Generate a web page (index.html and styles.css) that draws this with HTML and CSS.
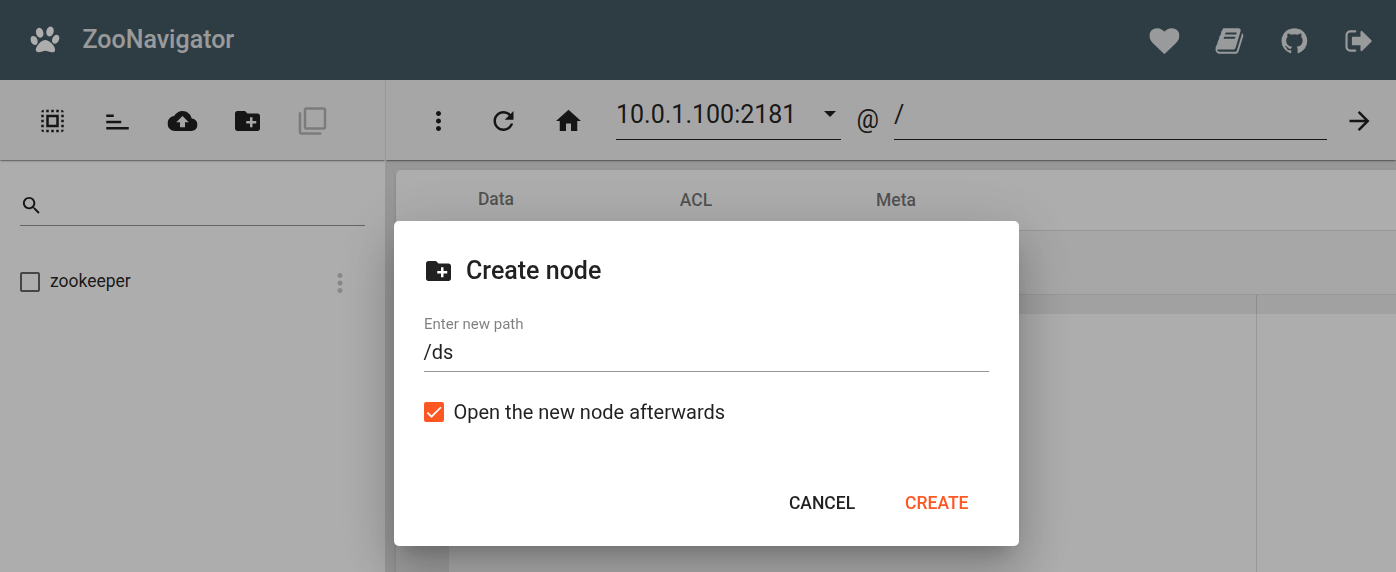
FILE: index.html
```
<!DOCTYPE html>
<html lang="en">
<head>
<meta charset="utf-8">
<title>ZooNavigator</title>
<link rel="stylesheet" href="styles.css">
</head>
<body>
<div class="app">
  <header class="header">
    <svg class="icon logo" viewBox="0 0 1792 1792"><path d="M780 510q0 60-19 113.500t-63 92.500-105 39q-76 0-138-57.500t-92-135.500-30-151q0-60 19-113.500t63-92.500 105-39q77 0 138.500 57.500t91.500 135 30 151.500zm-342 483q0 80-42 139t-119 59q-76 0-141.500-55.500t-100.500-133.500-35-152q0-80 42-139.500t119-59.500q76 0 141.500 55.500t100.500 134 35 152.500zm458-97q118 0 255 97.500t229 237 92 254.500q0 46-17 76.500t-48.500 45-64.500 20-76 5.500q-68 0-187.500-45t-182.500-45q-66 0-192.500 44.500t-200.500 44.500q-183 0-183-146 0-86 56-191.500t139.500-192.500 187.500-146 193-59zm239-211q-61 0-105-39t-63-92.500-19-113.500q0-74 30-151.500t91.500-135 138.500-57.500q61 0 105 39t63 92.500 19 113.500q0 73-30 151t-92 135.500-138 57.500zm432-104q77 0 119 59.500t42 139.500q0 74-35 152t-100.500 133.500-141.500 55.500q-77 0-119-59t-42-139q0-74 35-152.500t100.500-134 141.500-55.500z"/></svg>
    <h1 class="brand">ZooNavigator</h1>
    <nav class="links">
      <svg class="icon" viewBox="0 0 1792 1792"><path d="M896 1664q-26 0-44-18l-624-602q-10-8-27.500-26T145 952.500 77 855 23.500 734 0 596q0-220 127-344t351-124q62 0 126.500 21.500t120 58T820 276t76 68q36-36 76-68t95.500-68.500 120-58T1314 128q224 0 351 124t127 344q0 221-229 450l-623 600q-18 18-44 18z"/></svg>
      <svg class="icon" viewBox="0 0 1792 1792"><path d="M1703 478q40 57 18 129l-275 906q-19 64-76.500 107.500t-122.500 43.500h-923q-77 0-148.500-53.500t-99.500-131.500q-24-67-2-127 0-4 3-27t4-37q1-8-3-21.500t-3-19.500q2-11 8-21t16.500-23.500 16.500-23.500q23-38 45-91.500t30-91.500q3-10 .5-30t-.5-28q3-11 17-28t17-23q21-36 42-92t25-90q1-9-2.500-32t.5-28q4-13 22-30.500t22-22.500q19-26 42.500-84.500t27.500-96.500q1-8-3-25.500t-2-26.500q2-8 9-18t18-23 17-21q8-12 16.500-30.500t15-35 16-36 19.500-32 26.500-23.500 36-11.500 47.500 5.500l-1 3q38-9 51-9h761q74 0 114 56t18 130l-274 906q-36 119-71.500 153.500t-128.500 34.500h-869q-27 0-38 15-11 16-1 43 24 70 144 70h923q29 0 56-15.500t35-41.500l300-987q7-22 5-57 38 15 59 43zm-1064 2q-4 13 2 22.500t20 9.500h608q13 0 25.500-9.500t16.500-22.500l21-64q4-13-2-22.500t-20-9.500h-608q-13 0-25.500 9.500t-16.500 22.500zm-83 256q-4 13 2 22.500t20 9.500h608q13 0 25.500-9.500t16.500-22.500l21-64q4-13-2-22.500t-20-9.500h-608q-13 0-25.500 9.500t-16.500 22.500z"/></svg>
      <svg class="icon" viewBox="0 0 1792 1792"><path d="M896 128q209 0 385.500 103t279.500 279.500 103 385.500q0 251-146.500 451.500t-378.500 277.500q-27 5-40-7t-13-30q0-3 .5-76.500t.5-134.500q0-97-52-142 57-6 102.500-18t94-39 81-66.500 53-105 20.500-150.500q0-119-79-206 37-91-8-204-28-9-81 11t-92 44l-38 24q-93-26-192-26t-192 26q-16-11-42.500-27t-83.500-38.500-85-13.500q-45 113-8 204-79 87-79 206 0 85 20.500 150t52.500 105 80.500 67 94 39 102.500 18q-39 36-49 103-21 10-45 15t-57 5-65.500-21.500-55.500-62.500q-19-32-48.500-52t-49.500-24l-20-3q-21 0-29 4.500t-5 11.500 9 14 13 12l7 5q22 10 43.500 38t31.500 51l10 23q13 38 44 61.500t67 30 69.500 7 55.500-3.500l23-4q0 38 .5 88.500t.5 54.500q0 18-13 30t-40 7q-232-77-378.500-277.500t-146.500-451.500q0-209 103-385.500t279.500-279.500 385.500-103z"/></svg>
      <svg class="icon" viewBox="0 0 1792 1792"><path d="M704 1440q0 4 1 20t.5 26.500-3 23.500-10 19.500-20.500 6.500h-320q-119 0-203.500-84.500t-84.500-203.500v-704q0-119 84.500-203.500t203.500-84.500h320q13 0 22.500 9.500t9.500 22.500q0 4 1 20t.5 26.500-3 23.500-10 19.500-20.500 6.500h-320q-66 0-113 47t-47 113v704q0 66 47 113t113 47h312l11.500 1 11.500 3 8 5.500 7 9 2 13.500zm928-544q0 26-19 45l-544 544q-19 19-45 19t-45-19-19-45v-288h-448q-26 0-45-19t-19-45v-384q0-26 19-45t45-19h448v-288q0-26 19-45t45-19 45 19l544 544q19 19 19 45z"/></svg>
    </nav>
  </header>

  <div class="workspace">
    <aside class="sidebar">
      <div class="toolbar side-tools">
        <svg class="icon" viewBox="0 0 24 24"><path d="M3 5h2V3c-1.100 0-2 .9-2 2zm0 8h2v-2H3v2zm4 8h2v-2H7v2zM3 9h2V7H3v2zm10-6h-2v2h2V3zm6 0v2h2c0-1.100-.9-2-2-2zM5 21v-2H3c0 1.100.9 2 2 2zm-2-4h2v-2H3v2zM9 3H7v2h2V3zm2 18h2v-2h-2v2zm8-8h2v-2h-2v2zm0 8c1.100 0 2-.9 2-2h-2v2zm0-12h2V7h-2v2zm0 8h2v-2h-2v2zm-4 4h2v-2h-2v2zm0-16h2V3h-2v2zM7 17h10V7H7v10zm2-8h6v6H9V9z"/></svg>
        <svg class="icon sort" viewBox="0 0 24 24"><path d="M3 6h6v2H3zM3 11h12v2H3zM3 16h18v2H3z"/></svg>
        <svg class="icon" viewBox="0 0 24 24"><path d="M19.350 10.040C18.670 6.590 15.640 4 12 4 9.110 4 6.600 5.640 5.350 8.040 2.340 8.360 0 10.910 0 14c0 3.310 2.690 6 6 6h13c2.760 0 5-2.240 5-5 0-2.640-2.050-4.780-4.650-4.960zM14 13v4h-4v-4H7l5-5 5 5h-3z"/></svg>
        <svg class="icon" viewBox="0 0 24 24"><path d="M20 6h-8l-2-2H4c-1.110 0-1.990.89-1.990 2L2 18c0 1.110.89 2 2 2h16c1.110 0 2-.89 2-2V8c0-1.110-.89-2-2-2zm-1 8h-3v3h-2v-3h-3v-2h3V9h2v3h3v2z"/></svg>
        <svg class="icon disabled" viewBox="0 0 24 24"><path d="M3 5H1v16c0 1.100.9 2 2 2h16v-2H3V5zm18-4H7c-1.100 0-2 .9-2 2v14c0 1.100.9 2 2 2h14c1.100 0 2-.9 2-2V3c0-1.100-.9-2-2-2zm0 16H7V3h14v14z"/></svg>
      </div>
      <div class="side-body">
        <div class="search">
          <svg class="search-icon" viewBox="0 0 24 24"><path d="M15.500 14h-.79l-.28-.27C15.410 12.590 16 11.110 16 9.500 16 5.910 13.090 3 9.500 3S3 5.910 3 9.500 5.910 16 9.500 16c1.610 0 3.090-.59 4.230-1.570l.27.28v.79l5 4.990L20.490 19l-4.990-5zm-6 0C7.010 14 5 11.990 5 9.500S7.010 5 9.500 5 14 7.010 14 9.500 11.990 14 9.500 14z"/></svg>
        </div>
        <div class="node">
          <span class="box"></span>
          <span class="node-name">zookeeper</span>
          <svg class="icon node-menu" viewBox="0 0 24 24"><path d="M12 8c1.100 0 2-.9 2-2s-.9-2-2-2-2 .9-2 2 .9 2 2 2zm0 2c-1.100 0-2 .9-2 2s.9 2 2 2 2-.9 2-2-.9-2-2-2zm0 6c-1.100 0-2 .9-2 2s.9 2 2 2 2-.9 2-2-.9-2-2-2z"/></svg>
        </div>
      </div>
    </aside>

    <main class="main">
      <div class="toolbar main-tools">
        <svg class="icon" viewBox="0 0 24 24"><path d="M12 8c1.100 0 2-.9 2-2s-.9-2-2-2-2 .9-2 2 .9 2 2 2zm0 2c-1.100 0-2 .9-2 2s.9 2 2 2 2-.9 2-2-.9-2-2-2zm0 6c-1.100 0-2 .9-2 2s.9 2 2 2 2-.9 2-2-.9-2-2-2z"/></svg>
        <svg class="icon" viewBox="0 0 24 24"><path d="M17.650 6.350C16.200 4.900 14.210 4 12 4c-4.420 0-7.990 3.580-7.990 8s3.570 8 7.990 8c3.730 0 6.840-2.550 7.730-6h-2.080c-.82 2.330-3.040 4-5.650 4-3.310 0-6-2.690-6-6s2.690-6 6-6c1.660 0 3.140.69 4.220 1.780L13 11h7V4l-2.350 2.350z"/></svg>
        <svg class="icon" viewBox="0 0 24 24"><path d="M10 20v-6h4v6h5v-8h3L12 3 2 12h3v8z"/></svg>
        <div class="field host"><span>10.0.1.100:2181</span><i class="caret"></i></div>
        <span class="at">@</span>
        <div class="field path"><span>/</span></div>
        <svg class="icon go" viewBox="0 0 24 24"><path d="M12 4l-1.410 1.410L16.170 11H4v2h12.170l-5.580 5.590L12 20l8-8z"/></svg>
      </div>
      <section class="card">
        <div class="tabs"><span class="first">Data</span><span>ACL</span><span>Meta</span></div>
        <div class="card-tools"></div>
        <div class="editor">
          <div class="gutter"></div>
          <div class="code"><div class="active-line"></div></div>
        </div>
      </section>
    </main>
  </div>
</div>

<div class="backdrop">
  <div class="dialog">
    <h2 class="dialog-title">
      <svg class="icon" viewBox="0 0 24 24"><path d="M20 6h-8l-2-2H4c-1.110 0-1.990.89-1.990 2L2 18c0 1.110.89 2 2 2h16c1.110 0 2-.89 2-2V8c0-1.110-.89-2-2-2zm-1 8h-3v3h-2v-3h-3v-2h3V9h2v3h3v2z"/></svg>
      <span>Create node</span>
    </h2>
    <div class="input">
      <label class="input-label">Enter new path</label>
      <div class="input-value">/ds</div>
    </div>
    <div class="check">
      <svg class="check-box" viewBox="0 0 24 24"><path d="M4.100 12.700L9 17.600 20.300 6.300"/></svg>
      <span>Open the new node afterwards</span>
    </div>
    <div class="actions"><span>CANCEL</span><span class="primary">CREATE</span></div>
  </div>
</div>
</body>
</html>
```
FILE: styles.css
```
* { box-sizing: border-box; }
body {
  margin: 0;
  height: 572px;
  overflow: hidden;
  font-family: Roboto, "Liberation Sans", sans-serif;
  color: rgba(0, 0, 0, .87);
}
.app { height: 572px; display: flex; flex-direction: column; }
.icon { width: 30px; height: 30px; flex: none; fill: currentColor; }
.header .icon { transform: translateX(.4px); }
.toolbar .icon { transform: translateX(.5px); }

.header {
  height: 80px;
  flex: none;
  display: flex;
  align-items: center;
  padding: 0 22px 0 30px;
  background: #455a64;
  color: #e2e4e5;
}
.logo { color: #fff; }
.brand {
  margin: 0 0 1px 22.5px;
  font-size: 25px;
  line-height: 32px;
  font-weight: 500;
}
.links { display: flex; gap: 35px; margin: 2px 0 0 auto; }

.workspace { flex: 1; min-height: 0; display: flex; }
.sidebar {
  width: 386px;
  flex: none;
  border-right: 1px solid #e0e0e0;
  background: #fff;
}
.toolbar {
  height: 80px;
  display: flex;
  align-items: center;
  padding-top: 2px;
  background: #f5f5f5;
  box-shadow: 0 2px 1px -1px rgba(0, 0, 0, .2), 0 1px 1px rgba(0, 0, 0, .14), 0 1px 3px rgba(0, 0, 0, .12);
  clip-path: inset(0 0 -6px 0);
}
.side-tools { padding-left: 37px; gap: 35px; }
.sort { margin-top: 1px; }
.disabled { color: rgba(0, 0, 0, .26); }

.side-body { padding: 20px; }
.search {
  height: 46px;
  padding-top: 14px;
  border-bottom: 1px solid rgba(0, 0, 0, .42);
}
.search-icon { display: block; width: 23px; height: 23px; fill: currentColor; }
.node { display: flex; align-items: center; height: 50px; margin-top: 31px; }
.box { width: 20px; height: 20px; border: 2px solid rgba(0, 0, 0, .6); border-radius: 2px; }
.node-name { margin: -2px 0 0 10px; font-size: 17.5px; }
.node-menu { margin: 2px 10px 0 auto; color: rgba(0, 0, 0, .22); }

.main { flex: 1; min-width: 0; display: flex; flex-direction: column; background: #e0e0e0; }
.main-tools { flex: none; padding-left: 37px; }
.main-tools .icon + .icon { margin-left: 35px; }
.field {
  height: 44px;
  display: flex;
  align-items: center;
  justify-content: space-between;
  padding-bottom: 7px;
  margin-top: -6px;
  border-bottom: 1px solid rgba(0, 0, 0, .87);
  font-size: 25px;
}
.host { width: 225px; margin-left: 33px; }
.caret {
  margin-right: 5px;
  border: 6px solid transparent;
  border-top-color: currentColor;
  border-bottom: 0;
}
.at { margin: -4px 0 0 15.500px; width: 37.500px; font-size: 25px; }
.path { width: 433px; }
.go { margin-left: 17px; }

.card {
  flex: 1;
  display: flex;
  flex-direction: column;
  margin: 10px 0 0 10px;
  border-radius: 5px 0 0 0;
  background: #fff;
  overflow: hidden;
  box-shadow: 0 2px 1px -1px rgba(0, 0, 0, .2), 0 1px 1px rgba(0, 0, 0, .14), 0 1px 3px rgba(0, 0, 0, .12);
}
.tabs {
  height: 61px;
  flex: none;
  display: flex;
  align-items: center;
  border-bottom: 1px solid #e0e0e0;
  font-size: 17.5px;
  font-weight: 500;
  color: rgba(0, 0, 0, .54);
}
.tabs span { width: 200px; text-align: center; }
.tabs .first { margin-top: -2px; }
.card-tools { height: 64px; flex: none; background: #f7f7f7; border-bottom: 1px solid #e0e0e0; }
.editor { flex: 1; display: flex; }
.gutter { width: 53px; background: #ebebeb; }
.code {
  flex: 1;
  background: linear-gradient(#e0e0e0, #e0e0e0) 807px 0 / 1px 100% no-repeat;
}
.active-line { height: 19px; background: rgba(0, 0, 0, .07); }

.backdrop {
  position: fixed;
  inset: 0;
  background: rgba(0, 0, 0, .32);
}
.dialog {
  width: 625px;
  height: 325px;
  margin: 221px 0 0 394px;
  padding: 30px;
  border-radius: 5px;
  background: #fff;
  box-shadow: 0 13.750px 18.750px -8.750px rgba(0, 0, 0, .2), 0 30px 47.500px 3.750px rgba(0, 0, 0, .14), 0 11.250px 57.500px 10px rgba(0, 0, 0, .12);
}
.dialog-title {
  display: flex;
  align-items: center;
  gap: 12px;
  height: 40px;
  margin: 0;
  font-size: 25px;
  font-weight: 500;
}
.dialog-title .icon { transform: translateX(-.5px); }
.dialog-title span { margin-top: -2px; }
.input { height: 81px; padding-top: 24px; border-bottom: 1px solid rgba(0, 0, 0, .42); }
.input-label { display: block; font-size: 15px; line-height: 18px; color: rgba(0, 0, 0, .5); }
.input-value { margin: 7px 0 0 -.5px; font-size: 20px; line-height: 24px; }
.check { display: flex; align-items: center; gap: 9.500px; margin-top: 28px; font-size: 20px; line-height: 24px; }
.check-box { width: 20px; height: 20px; background: #ff5722; border-radius: 2px; fill: none; stroke: #fff; stroke-width: 2.100; }
.actions {
  display: flex;
  justify-content: flex-end;
  gap: 50px;
  margin-top: 67px;
  padding-right: 20.5px;
  font-size: 17.500px;
  font-weight: 500;
  line-height: 24px;
}
.primary { color: #ff5722; }
```
